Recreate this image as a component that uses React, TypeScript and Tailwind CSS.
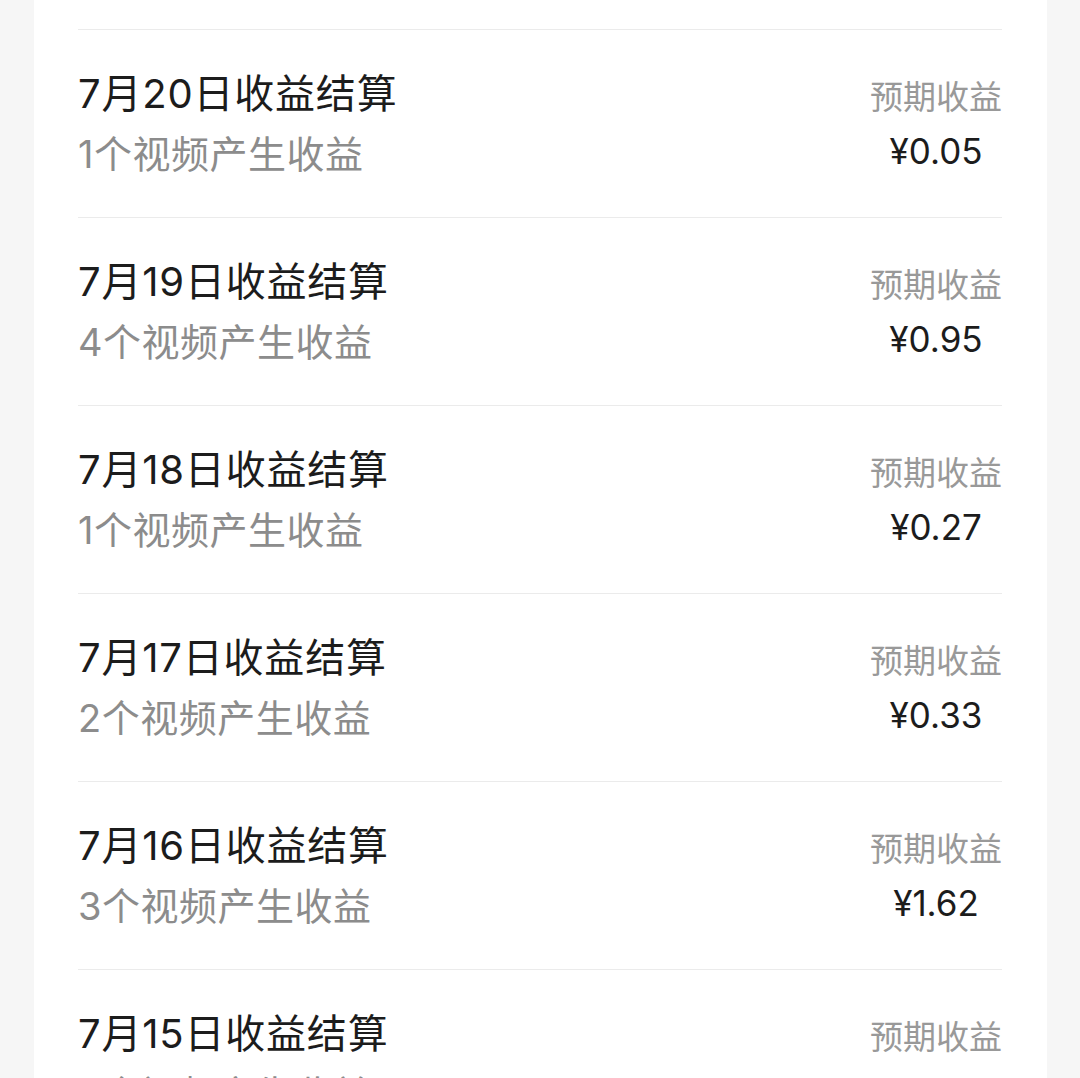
const rows = [
  { date: "7月20日", count: 1, amount: "0.05" },
  { date: "7月19日", count: 4, amount: "0.95" },
  { date: "7月18日", count: 1, amount: "0.27" },
  { date: "7月17日", count: 2, amount: "0.33" },
  { date: "7月16日", count: 3, amount: "1.62" },
  { date: "7月15日", count: 2, amount: "0.44" },
]

const font = { fontFamily: 'Inter, "Noto Sans CJK SC", "Noto Sans", sans-serif' }

function EarningRow({ date, count, amount }: { date: string; count: number; amount: string }) {
  return (
    <div className="flex h-[188px] items-center justify-between border-t border-[#ebebeb]">
      <div className="flex flex-col">
        <span className="text-[40px] leading-[60px] tracking-[0.8px] text-[#1c1c1c]">{date}收益结算</span>
        <span className="text-[38px] leading-[60px] tracking-[0.5px] text-[#8c8c8c]">{count}个视频产生收益</span>
      </div>
      <div className="flex w-[132px] flex-col items-center">
        <span className="text-[33px] leading-[54px] text-[#999999]">预期收益</span>
        <span className="text-[35px] leading-[54px] text-[#1c1c1c]">¥{amount}</span>
      </div>
    </div>
  )
}

export default function App() {
  return (
    <div className="h-[1078px] overflow-hidden bg-[#f6f6f6] pl-[34px] pr-[33px]" style={font}>
      <div className="h-full bg-white px-[44px] pr-[45px]">
        <div className="h-[29px]" />
        {rows.map((r) => (
          <EarningRow key={r.date} {...r} />
        ))}
      </div>
    </div>
  )
}
